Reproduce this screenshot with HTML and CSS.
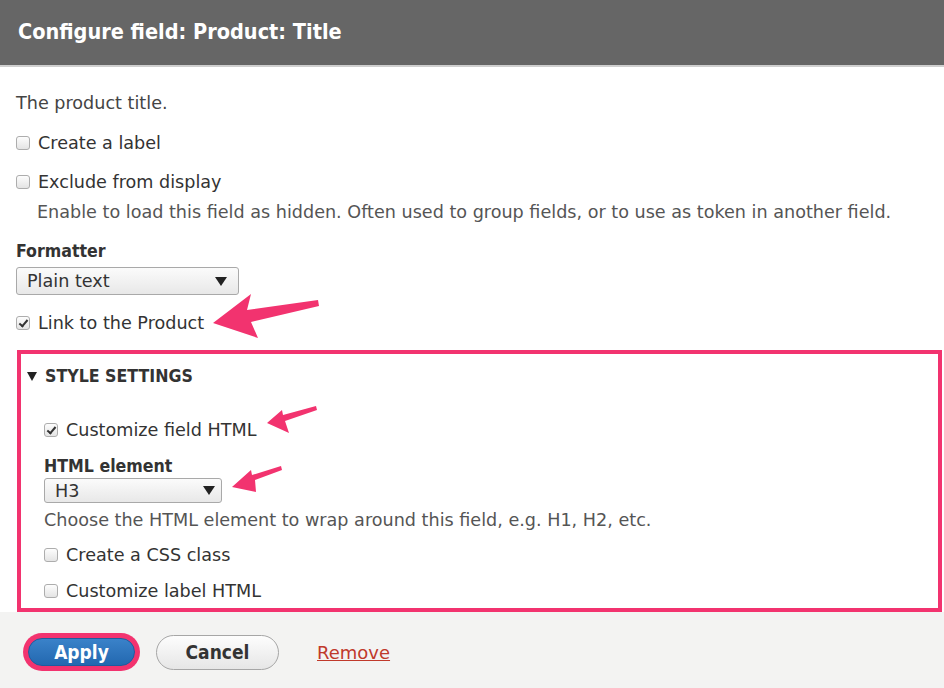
FILE: index.html
```html
<!DOCTYPE html>
<html>
<head>
<meta charset="utf-8">
<link rel="stylesheet" href="styles.css">
</head>
<body>
<div class="dialog">
  <header class="titlebar"><h1 class="title">Configure field: Product: Title</h1></header>
  <main class="content">
    <p class="intro">The product title.</p>
    <label class="check row-create"><span class="box"></span>Create a label</label>
    <label class="check row-exclude"><span class="box"></span>Exclude from display</label>
    <div class="help indent">Enable to load this field as hidden. Often used to group fields, or to use as token in another field.</div>
    <div class="field-label row-formatter">Formatter</div>
    <div class="select select-formatter"><span>Plain text</span><span class="caret"></span></div>
    <label class="check row-link"><span class="box checked"></span>Link to the Product</label>
    <section class="fieldset">
      <div class="legend"><span class="tri"></span>STYLE SETTINGS</div>
      <div class="inner">
        <label class="check row-cust"><span class="box checked"></span>Customize field HTML</label>
        <div class="field-label row-element">HTML element</div>
        <div class="select select-element"><span>H3</span><span class="caret"></span></div>
        <div class="help row-elhelp">Choose the HTML element to wrap around this field, e.g. H1, H2, etc.</div>
        <label class="check row-css"><span class="box"></span>Create a CSS class</label>
        <label class="check row-label"><span class="box"></span>Customize label HTML</label>
      </div>
    </section>
  </main>
  <footer class="actions">
    <span class="apply-ring"><button class="btn btn-primary">Apply</button></span>
    <button class="btn btn-default">Cancel</button>
    <a class="remove" href="#">Remove</a>
  </footer>
  <svg class="annot" width="944" height="688" viewBox="0 0 944 688">
    <polygon fill="#f2336f" points="213,323 251,294 247,310 318,300 319,306 251,322 258,338"/>
    <polygon fill="#f2336f" points="267,423 282,410 283,415 316,406 317,410 285,421 289,433"/>
    <polygon fill="#f2336f" points="232,487 251,470 252,475 281,466 282,470 255,480 256,492"/>
  </svg>
</div>
</body>
</html>
```

FILE: styles.css
```css
* { box-sizing: border-box; }
html, body { margin: 0; padding: 0; }
body {
  width: 944px;
  height: 688px;
  overflow: hidden;
  background: #fff;
  font-family: "DejaVu Sans", "Liberation Sans", sans-serif;
  font-size: 17.6px;
  color: #333;
}
.dialog { position: relative; width: 944px; height: 688px; display: flex; flex-direction: column; }
.titlebar {
  height: 67px;
  background: #666;
  border-bottom: 2px solid #cfcfcf;
  display: flex;
  align-items: center;
  padding-left: 18px;
  padding-bottom: 2px;
}
.title {
  margin: 0;
  color: #fff;
  font-family: "DejaVu Sans Condensed", "DejaVu Sans", sans-serif;
  font-stretch: condensed;
  font-size: 21.5px;
  font-weight: bold;
}
.content { padding: 26px 0 0 16px; display: flex; flex-direction: column; align-items: flex-start; }
.intro { margin: 0; line-height: 20px; color: #444; }
.check { display: flex; align-items: center; line-height: 20px; color: #333; }
.box {
  width: 14px; height: 14px;
  margin-right: 8px;
  border: 1px solid #adadad;
  border-radius: 3px;
  background: linear-gradient(#fdfdfd, #e4e4e4);
  position: relative;
  flex: none;
}
.box.checked::after {
  content: "";
  position: absolute;
  left: 4px; top: 1px;
  width: 3px; height: 7px;
  border: solid #333;
  border-width: 0 2px 2px 0;
  transform: rotate(40deg);
}
.row-create { margin-top: 20px; }
.row-exclude { margin-top: 19px; }
.help { line-height: 20px; color: #555; }
.indent { margin-top: 10px; padding-left: 21px; }
.field-label, .legend {
  font-family: "DejaVu Sans Condensed", "DejaVu Sans", sans-serif;
  font-stretch: condensed;
  font-weight: bold;
  line-height: 20px;
  color: #333;
}
.row-formatter { margin-top: 19px; }
.select {
  display: flex; align-items: center; justify-content: space-between;
  border: 1px solid #a9a9a9;
  border-radius: 3px;
  background: linear-gradient(#fbfbfb, #e8e8e8);
  color: #333;
}
.select-formatter { margin-top: 6px; width: 223px; height: 28px; padding: 0 11px 0 10px; }
.select-element { margin-top: 2px; width: 178px; height: 25px; padding: 0 6px 0 10px; }
.caret {
  width: 0; height: 0;
  border-left: 6px solid transparent;
  border-right: 6px solid transparent;
  border-top: 9px solid #222;
}
.row-link { margin-top: 18px; }
.fieldset {
  margin-top: 17px;
  margin-left: 1px;
  width: 925px;
  border: 4px solid #f2336f;
  padding: 12px 0 7px 6px;
  align-self: flex-start;
}
.legend { display: flex; align-items: center; }
.tri {
  width: 0; height: 0;
  border-left: 5px solid transparent;
  border-right: 5px solid transparent;
  border-top: 9px solid #222;
  margin-right: 8px;
}
.inner { padding-left: 17px; display: flex; flex-direction: column; align-items: flex-start; }
.row-cust { margin-top: 34px; }
.row-element { margin-top: 16px; }
.row-elhelp { margin-top: 7px; }
.row-css { margin-top: 15px; }
.row-label { margin-top: 16px; }
.actions {
  flex: 1;
  background: #f3f3f2;
  display: flex;
  align-items: center;
  padding: 4px 0 0 23px;
}
.apply-ring {
  display: inline-flex;
  padding: 5px;
  border-radius: 22px;
  background: #f2336f;
}
.btn {
  font-family: "DejaVu Sans Condensed", "DejaVu Sans", sans-serif;
  font-stretch: condensed;
  font-size: 19px;
  font-weight: bold;
  border-radius: 18px;
  cursor: pointer;
}
.btn-primary {
  width: 107px; height: 28px;
  border: 1px solid #1e5c9e;
  background: linear-gradient(#3a82c9, #2368b0);
  color: #fff;
  padding: 0;
}
.btn-default {
  margin-left: 16px;
  width: 123px; height: 35px;
  border: 1px solid #a6a6a6;
  background: linear-gradient(#fdfdfd, #e6e6e6);
  color: #333;
  padding: 0;
}
.remove {
  margin-left: 38px;
  color: #c0392b;
  font-size: 18px;
  text-decoration: underline;
}
.annot { position: absolute; left: 0; top: 0; pointer-events: none; }
```
